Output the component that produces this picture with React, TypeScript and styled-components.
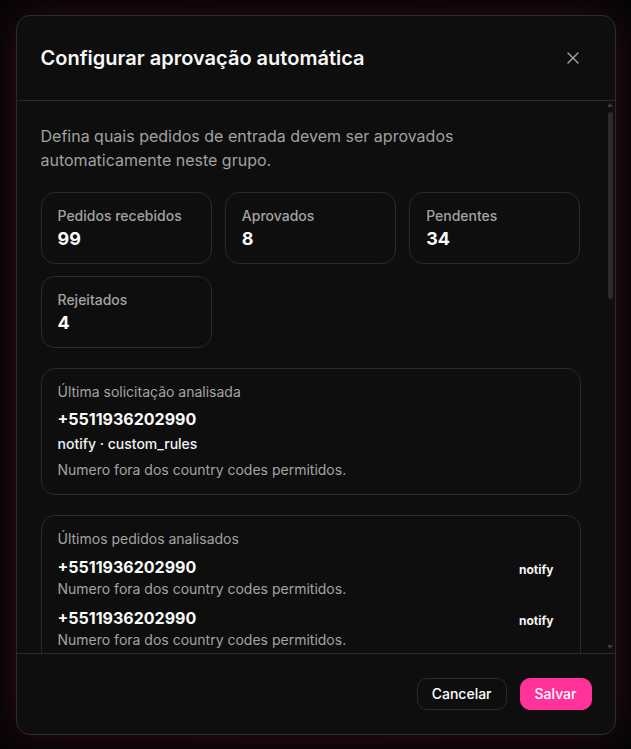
import styled, { createGlobalStyle } from "styled-components";

const GlobalStyle = createGlobalStyle`
  html, body {
    margin: 0;
    padding: 0;
    background: #060606;
    color-scheme: dark;
  }
  body {
    font-family: Inter, "Noto Sans", sans-serif;
    -webkit-font-smoothing: antialiased;
  }
  * {
    box-sizing: border-box;
  }
`;

const Overlay = styled.div`
  min-height: 100vh;
  display: flex;
  align-items: center;
  justify-content: center;
  background: radial-gradient(ellipse at center, #0b0709 0%, #050505 80%);
`;

const Modal = styled.div`
  width: 600px;
  max-height: calc(100vh - 29px);
  display: flex;
  flex-direction: column;
  background: #0e0e0e;
  border: 1px solid #2b2b2b;
  border-radius: 14px;
  box-shadow: 0 0 36px rgba(255, 40, 140, 0.16);
  overflow: hidden;
`;

const Header = styled.div`
  display: flex;
  align-items: center;
  justify-content: space-between;
  padding: 28px 24px;
  border-bottom: 1px solid #2b2b2b;
`;

const Title = styled.h2`
  margin: 0;
  font-size: 20px;
  line-height: 28px;
  font-weight: 600;
  color: #f7f7f7;
`;

const CloseButton = styled.button`
  width: 28px;
  height: 28px;
  display: flex;
  align-items: center;
  justify-content: center;
  background: transparent;
  border: none;
  padding: 0;
  margin-right: 4px;
  cursor: pointer;
`;

const Body = styled.div`
  flex: 1;
  min-height: 0;
  display: flex;
`;

const ScrollArea = styled.div`
  flex: 1;
  min-width: 0;
  overflow-y: auto;
  padding: 23px 24px 24px 24px;
  display: flex;
  flex-direction: column;
  gap: 20px;
  scrollbar-width: none;

  &::-webkit-scrollbar {
    display: none;
  }
`;

const Rail = styled.div`
  width: 10px;
  flex-shrink: 0;
  display: flex;
  flex-direction: column;
  align-items: center;
  padding: 2px 0 4px 1px;
`;

const Arrow = styled.span<{ $down?: boolean }>`
  width: 0;
  height: 0;
  border-left: 3px solid transparent;
  border-right: 3px solid transparent;
  ${({ $down }) =>
    $down
      ? "border-top: 4px solid #3e3e3e; margin-top: auto;"
      : "border-bottom: 4px solid #3e3e3e;"}
`;

const Thumb = styled.span`
  width: 5px;
  height: 187px;
  margin-top: 5px;
  border-radius: 3px;
  background: #2b2b2b;
`;

const Description = styled.p`
  margin: 0;
  font-size: 16px;
  line-height: 24px;
  color: #a1a1a1;
`;

const StatsGrid = styled.div`
  display: grid;
  grid-template-columns: repeat(3, 1fr);
  gap: 12px 13px;
`;

const Card = styled.div`
  background: #0e0e0e;
  border: 1px solid #2a2a2a;
  border-radius: 14px;
  padding: 14px 16px;
`;

const StatCard = styled(Card)`
  display: flex;
  flex-direction: column;
  gap: 4px;
`;

const StatLabel = styled.span`
  font-size: 14px;
  font-weight: 500;
  color: #a3a3a3;
`;

const StatValue = styled.span`
  font-size: 18px;
  font-weight: 700;
  color: #fafafa;
`;

const CardTitle = styled.div`
  font-size: 14px;
  line-height: 18px;
  color: #a3a3a3;
`;

const Phone = styled.div<{ $gap: number }>`
  margin-top: ${({ $gap }) => $gap}px;
  font-size: 16px;
  line-height: 24px;
  font-weight: 700;
  color: #fafafa;
`;

const Meta = styled.div`
  margin-top: 3px;
  font-size: 14px;
  line-height: 20px;
  font-weight: 500;
  color: #f2f2f2;
`;

const Reason = styled.div<{ $gap?: number }>`
  margin-top: ${({ $gap = 0 }) => $gap}px;
  font-size: 14px;
  line-height: 20px;
  color: #a3a3a3;
`;

const ItemList = styled.div`
  display: flex;
  flex-direction: column;
  gap: 7px;
  margin-top: 7px;
`;

const Item = styled.div`
  display: flex;
  align-items: flex-start;
  justify-content: space-between;
`;

const Tag = styled.span`
  padding: 7px 10px 0;
  font-size: 12px;
  line-height: 16px;
  font-weight: 700;
  color: #f5f5f5;
`;

const Footer = styled.div`
  display: flex;
  justify-content: flex-end;
  gap: 13px;
  padding: 24px 23px 24px 24px;
  border-top: 1px solid #2b2b2b;
`;

const Button = styled.button<{ $primary?: boolean }>`
  height: 32px;
  padding: 0 14px;
  border-radius: 10px;
  font-family: inherit;
  font-size: 14px;
  font-weight: 500;
  color: #ffffff;
  cursor: pointer;
  background: ${({ $primary }) => ($primary ? "#ff3399" : "#0e0e0e")};
  border: 1px solid ${({ $primary }) => ($primary ? "#ff3399" : "#2a2a2a")};
`;

const stats = [
  { label: "Pedidos recebidos", value: 99 },
  { label: "Aprovados", value: 8 },
  { label: "Pendentes", value: 34 },
  { label: "Rejeitados", value: 4 },
];

const recent = Array.from({ length: 20 }, () => ({
  phone: "+5511936202990",
  reason: "Numero fora dos country codes permitidos.",
  action: "notify",
}));

function CloseIcon() {
  return (
    <svg width="12" height="12" viewBox="0 0 12 12" fill="none">
      <path
        d="M1 1L11 11M11 1L1 11"
        stroke="#a6a6a6"
        strokeWidth="1.4"
        strokeLinecap="round"
      />
    </svg>
  );
}

export default function App() {
  return (
    <>
      <GlobalStyle />
      <Overlay>
        <Modal>
          <Header>
            <Title>Configurar aprovação automática</Title>
            <CloseButton aria-label="Fechar">
              <CloseIcon />
            </CloseButton>
          </Header>

          <Body>
            <ScrollArea>
              <Description>
                Defina quais pedidos de entrada devem ser aprovados
                automaticamente neste grupo.
              </Description>

              <StatsGrid>
                {stats.map((s) => (
                  <StatCard key={s.label}>
                    <StatLabel>{s.label}</StatLabel>
                    <StatValue>{s.value}</StatValue>
                  </StatCard>
                ))}
              </StatsGrid>

              <Card>
                <CardTitle>Última solicitação analisada</CardTitle>
                <Phone $gap={6}>+5511936202990</Phone>
                <Meta>notify · custom_rules</Meta>
                <Reason $gap={6}>Numero fora dos country codes permitidos.</Reason>
              </Card>

              <Card>
                <CardTitle>Últimos pedidos analisados</CardTitle>
                <ItemList>
                  {recent.map((r, i) => (
                    <Item key={i}>
                      <div>
                        <Phone $gap={0}>{r.phone}</Phone>
                        <Reason>{r.reason}</Reason>
                      </div>
                      <Tag>{r.action}</Tag>
                    </Item>
                  ))}
                </ItemList>
              </Card>
            </ScrollArea>
            <Rail aria-hidden>
              <Arrow />
              <Thumb />
              <Arrow $down />
            </Rail>
          </Body>

          <Footer>
            <Button>Cancelar</Button>
            <Button $primary>Salvar</Button>
          </Footer>
        </Modal>
      </Overlay>
    </>
  );
}
